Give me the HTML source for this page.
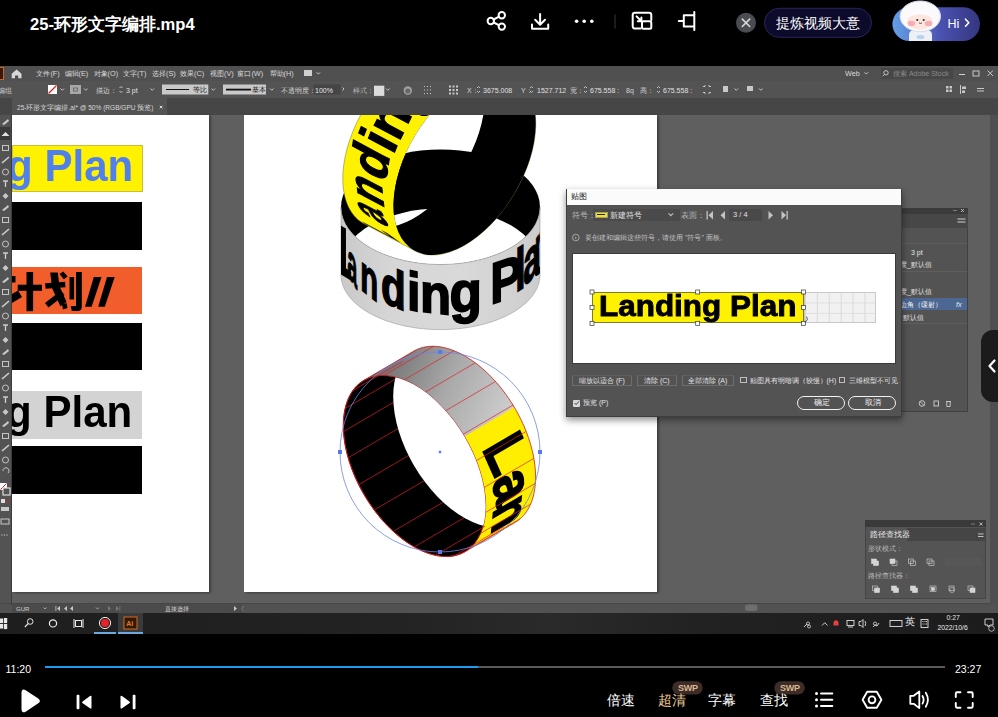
<!DOCTYPE html>
<html><head><meta charset="utf-8">
<style>
*{margin:0;padding:0;box-sizing:border-box}
html,body{width:998px;height:717px;overflow:hidden;background:#000;font-family:"Liberation Sans",sans-serif;color:#fff}
.a{position:absolute}
svg{position:absolute;left:0;top:0;overflow:visible}
.t{position:absolute;white-space:nowrap;line-height:1}
</style></head><body>
<div class="a" style="left:0;top:0;width:998px;height:66px;background:#000"></div>
<div class="t" style="left:30px;top:16.5px;font-size:16.6px;font-weight:bold;color:#fff;letter-spacing:0px">25-环形文字编排.mp4</div>
<svg width="998" height="66" viewBox="0 0 998 66">
 <g fill="none" stroke="#fff" stroke-width="2" stroke-linecap="round" stroke-linejoin="round">
  <!-- share -->
  <circle cx="490.8" cy="21" r="3.2"/><circle cx="501.8" cy="15.2" r="3.2"/><circle cx="501.8" cy="26.6" r="3.2"/>
  <line x1="493.6" y1="19.5" x2="499" y2="16.6"/><line x1="493.6" y1="22.5" x2="499" y2="25.2"/>
  <!-- download -->
  <path d="M540.1 14v10.5 M535.2 19.8l4.9 4.9 4.9-4.9 M532 24.5v4.3h16.2v-4.3"/>
  <!-- pip -->
  <path d="M640.5 28.6h-5.5a2.3 2.3 0 0 1-2.3-2.3v-11.3a2.3 2.3 0 0 1 2.3-2.3h14a2.3 2.3 0 0 1 2.3 2.3v5"/>
  <rect x="642" y="21.3" width="9.3" height="7.5" rx="1.5"/>
  <path d="M636.6 16.4l4.8 4.8 M641.4 17.6v3.6h-3.6"/>
  <!-- crop-ish -->
  <path d="M694.3 12v18 M694 15.3h-10.2v11.3h10.2 M683.8 21h-5"/>
 </g>
 <g fill="#fff"><circle cx="576.6" cy="21.2" r="1.8"/><circle cx="584.2" cy="21.2" r="1.8"/><circle cx="591.8" cy="21.2" r="1.8"/></g>
 <line x1="615" y1="14.5" x2="615" y2="28.5" stroke="#3a3a3a" stroke-width="1"/>
 <!-- close circle -->
 <circle cx="746" cy="22.8" r="10" fill="#4b4b52"/>
 <path d="M742.3 19.1l7.4 7.4M749.7 19.1l-7.4 7.4" stroke="#d8d8dc" stroke-width="1.6" stroke-linecap="round"/>
 <!-- pill -->
 <rect x="764.5" y="8.3" width="107" height="29" rx="14.5" fill="#0d0b2b" stroke="#2a2556" stroke-width="1"/>
 <defs>
  <linearGradient id="hig" x1="0" y1="0" x2="1" y2="0">
   <stop offset="0" stop-color="#62a0e4"/><stop offset="0.3" stop-color="#5a78d0"/><stop offset="0.55" stop-color="#4a52b0"/><stop offset="1" stop-color="#343680"/>
  </linearGradient>
  <radialGradient id="face" cx="0.5" cy="0.45" r="0.55"><stop offset="0" stop-color="#fff"/><stop offset="0.8" stop-color="#f4f1f6"/><stop offset="1" stop-color="#d8d6e4"/></radialGradient>
 </defs>
 <rect x="892.4" y="7.2" width="87.6" height="33.8" rx="16.9" fill="url(#hig)"/>
 <!-- astronaut -->
 <path d="M909 41v-6q0-4 4-5h15q4 1 4 5v6z" fill="#eef0f8"/>
 <ellipse cx="920.5" cy="37" rx="4" ry="2" fill="#9fc4ea" opacity="0.7"/>
 <ellipse cx="920.3" cy="16.3" rx="20.2" ry="15.3" fill="#fafafc"/>
 <ellipse cx="920.3" cy="16.3" rx="20.2" ry="15.3" fill="none" stroke="#d9dcec" stroke-width="1"/>
 <ellipse cx="920" cy="21.5" rx="12.8" ry="8.3" fill="#fde6de"/>
 <path d="M907.5 18q1-8 12.5-8.5q11.5 0.5 12.8 8.5q-6-3.5-12.8-3.5q-6.8 0-12.5 3.5z" fill="#fbfbfd"/>
 <ellipse cx="911.5" cy="23.5" rx="3.8" ry="2.8" fill="#f5a3ae" opacity="0.85"/>
 <ellipse cx="928.5" cy="23.5" rx="3.8" ry="2.8" fill="#f5a3ae" opacity="0.85"/>
 <circle cx="917.3" cy="20" r="1.05" fill="#2a2a2a"/><circle cx="923.7" cy="20" r="1.05" fill="#2a2a2a"/>
 <path d="M919 22.8q1.5 1.3 3 0" stroke="#3a2a2a" stroke-width="0.8" fill="none"/>
</svg>
<div class="t" style="left:776px;top:16.3px;font-size:14px;color:#fff">提炼视频大意</div>
<div class="t" style="left:947.5px;top:17.8px;font-size:12.5px;color:#fff">Hi</div>
<svg width="998" height="66"><path d="M965.5 19.2l3.3 3.5-3.3 3.5" stroke="#fff" stroke-width="1.6" fill="none" stroke-linecap="round" stroke-linejoin="round"/></svg>
<div class="a" style="left:0;top:66px;width:998px;height:15px;background:#505050"></div>
<div class="a" style="left:0;top:81px;width:998px;height:17px;background:#535353"></div>
<div class="a" style="left:0;top:98px;width:998px;height:17px;background:#464646"></div>
<div class="a" style="left:12px;top:98px;width:155px;height:17px;background:#535353"></div>
<div class="a" style="left:0;top:115px;width:998px;height:490px;background:#5f5f5f"></div>
<div class="a" style="left:12px;top:115px;width:197px;height:477px;background:#fff;box-shadow:2px 1px 2px rgba(0,0,0,0.35)"></div>
<div class="a" style="left:244px;top:115px;width:413px;height:477px;background:#fff;box-shadow:2px 1px 2px rgba(0,0,0,0.35)"></div>
<div class="a" style="left:0;top:115px;width:12px;height:490px;background:#535353"></div>
<div class="a" style="left:0;top:602.5px;width:998px;height:1px;background:#474747"></div>
<div class="a" style="left:0;top:603.5px;width:998px;height:9.5px;background:#525252"></div>
<div class="a" style="left:0;top:613px;width:998px;height:21px;background:#1f1f1f"></div>
<div class="a" style="left:990px;top:115px;width:8px;height:490px;background:#4f4f4f"></div>
<!-- menu bar -->
<div class="a" style="left:-5px;top:67px;width:9px;height:13px;background:#3a1a06;border:1px solid #c8641e"></div>
<svg width="998" height="717">
 <path d="M11.7 73.8l4.9-4.3 4.9 4.3v4.4h-3.3v-2.6h-3.2v2.6h-3.3z" fill="#d8d8d8"/>
 <rect x="304" y="70" width="8" height="6" fill="#cfcfcf"/>
 <path d="M316.5 72.3l1.8 1.8 1.8-1.8" stroke="#cfcfcf" stroke-width="0.9" fill="none"/>
</svg>
<div class="t" style="left:36.4px;top:70px;font-size:7.3px;color:#d8d8d8;word-spacing:0">文件(F)</div>
<div class="t" style="left:64.5px;top:70px;font-size:7.3px;color:#d8d8d8">编辑(E)</div>
<div class="t" style="left:93.6px;top:70px;font-size:7.3px;color:#d8d8d8">对象(O)</div>
<div class="t" style="left:123px;top:70px;font-size:7.3px;color:#d8d8d8">文字(T)</div>
<div class="t" style="left:152px;top:70px;font-size:7.3px;color:#d8d8d8">选择(S)</div>
<div class="t" style="left:180px;top:70px;font-size:7.3px;color:#d8d8d8">效果(C)</div>
<div class="t" style="left:210px;top:70px;font-size:7.3px;color:#d8d8d8">视图(V)</div>
<div class="t" style="left:237.4px;top:70px;font-size:7.3px;color:#d8d8d8">窗口(W)</div>
<div class="t" style="left:269.5px;top:70px;font-size:7.3px;color:#d8d8d8">帮助(H)</div>
<div class="t" style="left:845px;top:70px;font-size:7.3px;color:#d8d8d8">Web</div>
<div class="a" style="left:881px;top:68px;width:72px;height:11px;background:#474747"></div>
<div class="t" style="left:893px;top:69.5px;font-size:7px;color:#8a8a8a">搜索 Adobe Stock</div>
<svg width="998" height="717">
 <path d="M864.5 72.3l1.8 1.8 1.8-1.8" stroke="#cfcfcf" stroke-width="0.9" fill="none"/>
 <circle cx="886" cy="72.8" r="2.2" fill="none" stroke="#cfcfcf" stroke-width="0.9"/><path d="M884.4 74.5l-1.8 1.8" stroke="#cfcfcf" stroke-width="0.9"/>
 <rect x="959" y="74" width="6" height="1" fill="#d4d4d4"/>
 <rect x="973" y="71" width="6" height="5" fill="none" stroke="#d4d4d4" stroke-width="0.9"/>
 <path d="M987.5 70.5l5.5 5.5m0-5.5l-5.5 5.5" stroke="#d4d4d4" stroke-width="0.9"/>
</svg>
<!-- control bar -->
<div class="t" style="left:-2px;top:86.5px;font-size:7px;color:#c8c8c8">编组</div>
<svg width="998" height="717">
 <rect x="48" y="85" width="9" height="9" fill="#fff"/><path d="M48.5 93.5l8-8" stroke="#e02020" stroke-width="1.2"/>
 <rect x="70" y="85" width="11" height="9" fill="#a8a8a8"/><rect x="73.5" y="88" width="4" height="3" fill="none" stroke="#555" stroke-width="0.7"/>
 <g stroke="#cfcfcf" stroke-width="0.9" fill="none">
  <path d="M60.5 88.5l1.8 1.8 1.8-1.8"/><path d="M84 88.5l1.8 1.8 1.8-1.8"/>
  <path d="M150.5 88.5l1.8 1.8 1.8-1.8"/><path d="M211.5 88.5l1.8 1.8 1.8-1.8"/><path d="M270 88.5l1.8 1.8 1.8-1.8"/>
  <path d="M342.5 87.5l1.5 1.5-1.5 1.5"/><path d="M386 88.5l1.8 1.8 1.8-1.8"/>
  <path d="M119.5 88l1.5-1.5 1.5 1.5 M119.5 91l1.5 1.5 1.5-1.5"/>
 </g>
 <rect x="162" y="84.5" width="46.3" height="10" fill="#c9c9c9"/><rect x="166" y="89" width="23" height="1" fill="#111"/>
 <rect x="223" y="84.5" width="43" height="10" fill="#c9c9c9"/><rect x="226" y="88.7" width="25" height="1.8" fill="#111"/>
 <rect x="313.5" y="84.5" width="27" height="10" fill="#454545"/>
 <rect x="374" y="85.7" width="10.3" height="10.2" fill="#dcdcdc"/>
 <circle cx="407.8" cy="90.5" r="4.2" fill="#a0a0a0"/><circle cx="407.8" cy="91" r="2.5" fill="#666"/>
 <g fill="#c8c8c8"><rect x="424" y="86" width="1" height="1"/><rect x="427" y="86" width="1" height="1"/><rect x="430" y="86" width="1" height="1"/><rect x="424" y="89.5" width="1" height="1"/><rect x="427" y="89.5" width="1" height="1"/><rect x="430" y="89.5" width="1" height="1"/><rect x="424" y="93" width="1" height="1"/><rect x="427" y="93" width="1" height="1"/><rect x="430" y="93" width="1" height="1"/></g>
 <g fill="#c8c8c8"><rect x="449" y="85.5" width="2" height="2"/><rect x="452.5" y="85.5" width="2" height="2"/><rect x="456" y="85.5" width="2" height="2"/><rect x="449" y="89" width="2" height="2"/><rect x="452.5" y="89" width="2" height="2"/><rect x="456" y="89" width="2" height="2"/><rect x="449" y="92.5" width="2" height="2"/><rect x="452.5" y="92.5" width="2" height="2"/><rect x="456" y="92.5" width="2" height="2"/></g>
 <g stroke="#cfcfcf" stroke-width="0.9" fill="none">
  <path d="M477 88l1.5-1.5 1.5 1.5 M477 91l1.5 1.5 1.5-1.5"/>
  <path d="M530 88l1.5-1.5 1.5 1.5 M530 91l1.5 1.5 1.5-1.5"/>
  <path d="M584 88l1.5-1.5 1.5 1.5 M584 91l1.5 1.5 1.5-1.5"/>
  <path d="M657 88l1.5-1.5 1.5 1.5 M657 91l1.5 1.5 1.5-1.5"/>
  <path d="M703 86.5h2v-1.5 M709 85v1.5h2 M711 92.5h-2v1.5 M705 94v-1.5h-2"/>
  <path d="M734.5 88.5l1.8 1.8 1.8-1.8"/><path d="M759 88.5l1.8 1.8 1.8-1.8"/>
 </g>
 <g fill="#c8c8c8"><rect x="723" y="86" width="5" height="6"/><rect x="747" y="86" width="6" height="5"/>
 <rect x="946" y="86" width="2.5" height="2.5"/><rect x="949.5" y="86" width="2.5" height="2.5"/><rect x="946" y="89.5" width="2.5" height="2.5"/><rect x="949.5" y="89.5" width="2.5" height="2.5"/>
 <rect x="960" y="85" width="1" height="9"/><rect x="962" y="86.5" width="4" height="2.5"/><rect x="962" y="90.5" width="3" height="2.5"/>
 <rect x="977" y="88" width="7" height="1"/><rect x="977" y="90.5" width="7" height="1"/></g>
</svg>
<div class="t" style="left:96px;top:86.5px;font-size:7.3px;color:#d4d4d4">描边：</div>
<div class="t" style="left:126px;top:86.5px;font-size:7px;color:#e0e0e0">3 pt</div>
<div class="t" style="left:193px;top:86px;font-size:7px;color:#222">等比</div>
<div class="t" style="left:252px;top:86px;font-size:7px;color:#222">基本</div>
<div class="t" style="left:281px;top:86.5px;font-size:7.3px;color:#d4d4d4">不透明度：</div>
<div class="t" style="left:315px;top:86.5px;font-size:7px;color:#e8e8e8">100%</div>
<div class="t" style="left:353px;top:86.5px;font-size:7.3px;color:#b8b8b8">样式：</div>
<div class="t" style="left:467px;top:86.5px;font-size:7px;color:#d4d4d4">X：</div>
<div class="t" style="left:483px;top:86.5px;font-size:7px;color:#e0e0e0">3675.008</div>
<div class="t" style="left:521px;top:86.5px;font-size:7px;color:#d4d4d4">Y：</div>
<div class="t" style="left:537px;top:86.5px;font-size:7px;color:#e0e0e0">1527.712</div>
<div class="t" style="left:570px;top:86.5px;font-size:7px;color:#d4d4d4">宽：</div>
<div class="t" style="left:590px;top:86.5px;font-size:7px;color:#e0e0e0">675.558 :</div>
<div class="t" style="left:626px;top:86.5px;font-size:7px;color:#d4d4d4">8q</div>
<div class="t" style="left:640px;top:86.5px;font-size:7px;color:#d4d4d4">高：</div>
<div class="t" style="left:663px;top:86.5px;font-size:7px;color:#e0e0e0">675.558 :</div>
<!-- tab bar -->
<div class="t" style="left:17px;top:105px;font-size:6.55px;color:#d8d8d8">25-环形文字编排.ai* @ 50% (RGB/GPU 预览)</div>
<svg width="998" height="717"><path d="M159.8 105.8l2.6 2.6m0-2.6l-2.6 2.6" stroke="#e0e0e0" stroke-width="1"/></svg>
<svg width="998" height="717"><rect x="0" y="127" width="10.5" height="13" fill="#3a3a3a"/><path d="M1.5 136l4-4 4 4z" fill="#e0e0e0"/><path d="M2 124.0 l6 -5 l1 2 l-5 4z" fill="#c8c8c8"/><rect x="2.5" y="145.5" width="6" height="5" fill="none" stroke="#c4c4c4" stroke-width="1"/><path d="M2 163.0 l7 -6" stroke="#cfcfcf" stroke-width="1.6"/><circle cx="5.5" cy="172.0" r="3" fill="none" stroke="#c4c4c4" stroke-width="1"/><path d="M3 181.0 h5 M5.5 181.0 v6" stroke="#cfcfcf" stroke-width="1.3"/><path d="M2.5 196.0 l3 -3 l3 3 l-3 3z" fill="#c8c8c8"/><path d="M2 210.0 l6 -5 l1 2 l-5 4z" fill="#c8c8c8"/><rect x="2.5" y="217.5" width="6" height="5" fill="none" stroke="#c4c4c4" stroke-width="1"/><path d="M2 235.0 l7 -6" stroke="#cfcfcf" stroke-width="1.6"/><circle cx="5.5" cy="244.0" r="3" fill="none" stroke="#c4c4c4" stroke-width="1"/><path d="M3 253.0 h5 M5.5 253.0 v6" stroke="#cfcfcf" stroke-width="1.3"/><path d="M2.5 268.0 l3 -3 l3 3 l-3 3z" fill="#c8c8c8"/><path d="M2 282.0 l6 -5 l1 2 l-5 4z" fill="#c8c8c8"/><rect x="2.5" y="289.5" width="6" height="5" fill="none" stroke="#c4c4c4" stroke-width="1"/><path d="M2 307.0 l7 -6" stroke="#cfcfcf" stroke-width="1.6"/><circle cx="5.5" cy="316.0" r="3" fill="none" stroke="#c4c4c4" stroke-width="1"/><path d="M3 325.0 h5 M5.5 325.0 v6" stroke="#cfcfcf" stroke-width="1.3"/><path d="M2.5 340.0 l3 -3 l3 3 l-3 3z" fill="#c8c8c8"/><path d="M2 354.0 l6 -5 l1 2 l-5 4z" fill="#c8c8c8"/><rect x="2.5" y="361.5" width="6" height="5" fill="none" stroke="#c4c4c4" stroke-width="1"/><path d="M2 379.0 l7 -6" stroke="#cfcfcf" stroke-width="1.6"/><circle cx="5.5" cy="388.0" r="3" fill="none" stroke="#c4c4c4" stroke-width="1"/><path d="M3 397.0 h5 M5.5 397.0 v6" stroke="#cfcfcf" stroke-width="1.3"/><path d="M2.5 412.0 l3 -3 l3 3 l-3 3z" fill="#c8c8c8"/><path d="M2 426.0 l6 -5 l1 2 l-5 4z" fill="#c8c8c8"/><rect x="2.5" y="433.5" width="6" height="5" fill="none" stroke="#c4c4c4" stroke-width="1"/><path d="M2 451.0 l7 -6" stroke="#cfcfcf" stroke-width="1.6"/><circle cx="5.5" cy="460.0" r="3" fill="none" stroke="#c4c4c4" stroke-width="1"/><path d="M3 471a3 3 0 1 1 5 2" stroke="#c8c8c8" stroke-width="1" fill="none"/><rect x="0" y="483" width="7" height="7" fill="#fff"/><path d="M0.5 489.5l6-6" stroke="#e02020" stroke-width="1"/><rect x="3" y="488" width="7" height="7" fill="#535353" stroke="#ddd" stroke-width="1.2"/><rect x="1" y="499" width="4" height="4" fill="#ddd"/><path d="M6 503l4-4" stroke="#e02020" stroke-width="1"/><rect x="1" y="507" width="8" height="4" fill="#c8c8c8"/><rect x="1" y="519" width="8" height="5" fill="none" stroke="#c8c8c8" stroke-width="1"/><g fill="#bbb"><circle cx="2" cy="535" r="0.7"/><circle cx="4.5" cy="535" r="0.7"/><circle cx="7" cy="535" r="0.7"/></g><rect x="11" y="115" width="1" height="490" fill="#3c3c3c"/></svg>
<div class="a" style="left:12px;top:115px;width:197px;height:477px;overflow:hidden">
 <div class="a" style="left:0;top:30.3px;width:130.5px;height:47px;background:#fff200;border:0.6px solid #c9bd3a"></div>
 <div class="t" style="left:-5.4px;top:28.1px;font-size:45px;font-weight:bold;color:#5180ea;transform:scaleX(0.935);transform-origin:0 0">g Plan</div>
 <div class="a" style="left:0;top:87px;width:130px;height:48.2px;background:#000"></div>
 <div class="a" style="left:0;top:151.5px;width:130px;height:47.5px;background:#f15d2b"></div>
 <svg width="197" height="477" viewBox="12 115 197 477" style="left:0;top:0">
  <g fill="#000">
   <path d="M12 276h3.5v6.5h-3.5z M12 294l6-3.5 4 6.5-10 6z"/>
   <rect x="26.5" y="272" width="6.6" height="39.2"/>
   <rect x="17.7" y="284.7" width="24.3" height="6.1"/>
   <rect x="45.3" y="282.5" width="20" height="5.6" transform="rotate(-4 55 285)"/>
   <path d="M50.2 272.5h7.6l1.6 13.5 7.2 16-6.2 4.2-8.2-17.7z"/>
   <path d="M45 303l16-12.5 3.5 4.5-16 12.5z"/>
   <path d="M59.5 274l3.8-2.5 4.3 5-3.8 2.7z"/>
   <path d="M62 304.5l4.5-1.5 1 5-4.5 1.5z"/>
   <rect x="69.5" y="277" width="4.6" height="22.5"/>
   <path d="M76 272h5.8v34.5q0 4.5-4.5 4.5h-5.5l-1-5h5.2z"/>
   <path d="M93.8 277h7.7l-9.9 29.8h-6.6z"/>
   <path d="M107 277h7.7l-9.9 29.8h-6.6z"/>
  </g>
 </svg>
 <div class="a" style="left:0;top:207.5px;width:130px;height:47.5px;background:#000"></div>
 <div class="a" style="left:0;top:276px;width:130px;height:48px;background:#d3d3d3"></div>
 <div class="t" style="left:-6.2px;top:273.9px;font-size:45px;font-weight:bold;color:#000;transform:scaleX(0.935);transform-origin:0 0">g Plan</div>
 <div class="a" style="left:0;top:331px;width:130px;height:47.5px;background:#000"></div>
</div>
<svg width="998" height="717" viewBox="0 0 998 717"><defs><clipPath id="cAB2"><rect x="244" y="115" width="413" height="477"/></clipPath><clipPath id="cEbot"><ellipse cx="440.50" cy="266.00" rx="99.50" ry="57.50" transform="rotate(0.00 440.50 266.00)" /></clipPath><clipPath id="cE1"><ellipse cx="464.60" cy="164.70" rx="99.50" ry="57.50" transform="rotate(-59.00 464.60 164.70)" /></clipPath><mask id="mHole1" maskUnits="userSpaceOnUse" x="200" y="0" width="500" height="400"><rect x="200" y="0" width="500" height="400" fill="#fff"/><g clip-path="url(#cE1)"><ellipse cx="413.90" cy="137.70" rx="99.50" ry="57.50" transform="rotate(-59.00 413.90 137.70)" fill="#000"/></g></mask><linearGradient id="gBand" x1="341" y1="0" x2="540" y2="0" gradientUnits="userSpaceOnUse"><stop offset="0" stop-color="#c9c9c9"/><stop offset="0.25" stop-color="#d6d6d6"/><stop offset="0.6" stop-color="#d9d9d9"/><stop offset="1" stop-color="#cdcdcd"/></linearGradient></defs><g clip-path="url(#cAB2)"><ellipse cx="440.50" cy="207.00" rx="99.50" ry="57.50" transform="rotate(0.00 440.50 207.00)" fill="#000"/><g clip-path="url(#cEbot)"><ellipse cx="440.50" cy="207.00" rx="99.50" ry="57.50" transform="rotate(0.00 440.50 207.00)" fill="#fff"/></g><g mask="url(#mHole1)"><path d="M462.50 50.98 L463.84 51.67 L514.54 78.67 L515.85 79.41 L517.12 80.22 L518.36 81.08 L519.56 82.00 L520.72 82.97 L521.84 84.01 L522.93 85.09 L523.97 86.24 L524.97 87.43 L525.94 88.68 L526.86 89.98 L527.73 91.34 L528.57 92.74 L529.36 94.19 L530.11 95.69 L530.81 97.24 L531.46 98.83 L532.07 100.47 L532.64 102.15 L533.15 103.88 L533.62 105.65 L534.05 107.45 L534.42 109.30 L534.75 111.19 L535.03 113.11 L535.26 115.06 L535.44 117.06 L535.58 119.08 L535.66 121.13 L535.70 123.22 L535.69 125.33 L535.63 127.47 L535.52 129.64 L535.36 131.83 L535.15 134.04 L534.90 136.27 L534.60 138.53 L534.25 140.80 L533.85 143.09 L533.40 145.39 L532.91 147.70 L532.37 150.03 L531.78 152.37 L531.15 154.71 L530.47 157.06 L529.75 159.42 L528.98 161.78 L528.17 164.15 L527.31 166.51 L526.41 168.87 L525.47 171.23 L524.49 173.59 L523.46 175.94 L522.40 178.28 L521.30 180.61 L520.15 182.93 L518.97 185.24 L517.76 187.53 L516.50 189.81 L515.21 192.07 L513.89 194.31 L512.53 196.54 L511.14 198.74 L509.71 200.92 L508.26 203.07 L506.78 205.19 L505.26 207.29 L503.72 209.36 L502.16 211.40 L500.56 213.41 L498.94 215.38 L497.30 217.32 L495.64 219.22 L493.95 221.09 L492.25 222.91 L490.52 224.70 L488.78 226.44 L487.02 228.15 L485.25 229.81 L483.46 231.42 L481.66 232.99 L479.85 234.51 L478.02 235.99 L476.19 237.41 L474.35 238.79 L472.51 240.12 L470.65 241.39 L468.80 242.61 L466.94 243.78 L465.08 244.89 L463.21 245.95 L461.35 246.95 L459.50 247.90 L457.64 248.79 L455.79 249.62 L453.95 250.39 L452.11 251.11 L450.28 251.76 L448.46 252.36 L446.66 252.89 L444.86 253.37 L443.08 253.78 L441.32 254.14 L439.56 254.43 L437.83 254.66 L436.12 254.83 L434.42 254.94 L432.75 254.98 L431.09 254.97 L429.46 254.89 L427.86 254.75 L426.28 254.55 L424.72 254.28 L423.19 253.96 L421.69 253.57 L420.23 253.12 L418.79 252.62 L417.38 252.05 L416.00 251.42 L414.66 250.73 L363.96 223.73 L362.65 222.99 L361.38 222.18 L360.14 221.32 L358.94 220.40 L357.78 219.43 L356.66 218.39 L355.57 217.31 L354.53 216.16 L353.53 214.97 L352.56 213.72 L351.64 212.42 L350.77 211.06 L349.93 209.66 L349.14 208.21 L348.39 206.71 L347.69 205.16 L347.04 203.57 L346.43 201.93 L345.86 200.25 L345.35 198.52 L344.88 196.75 L344.45 194.95 L344.08 193.10 L343.75 191.21 L343.47 189.29 L343.24 187.34 L343.06 185.34 L342.92 183.32 L342.84 181.27 L342.80 179.18 L342.81 177.07 L342.87 174.93 L342.98 172.76 L343.14 170.57 L343.35 168.36 L343.60 166.13 L343.90 163.87 L344.25 161.60 L344.65 159.31 L345.10 157.01 L345.59 154.70 L346.13 152.37 L346.72 150.03 L347.35 147.69 L348.03 145.34 L348.75 142.98 L349.52 140.62 L350.33 138.25 L351.19 135.89 L352.09 133.53 L353.03 131.17 L354.01 128.81 L355.04 126.46 L356.10 124.12 L357.20 121.79 L358.35 119.47 L359.53 117.16 L360.74 114.87 L362.00 112.59 L363.29 110.33 L364.61 108.09 L365.97 105.86 L367.36 103.66 L368.79 101.48 L370.24 99.33 L371.72 97.21 L373.24 95.11 L374.78 93.04 L376.34 91.00 L377.94 88.99 L379.56 87.02 L381.20 85.08 L382.86 83.18 L384.55 81.31 L386.25 79.49 L387.98 77.70 L389.72 75.96 L391.48 74.25 L393.25 72.59 L395.04 70.98 L396.84 69.41 L398.65 67.89 L400.48 66.41 L402.31 64.99 L404.15 63.61 L405.99 62.28 L407.85 61.01 L409.70 59.79 L411.56 58.62 L413.42 57.51 L415.29 56.45 L417.15 55.45 L419.00 54.50 L420.86 53.61 L422.71 52.78 L424.55 52.01 L426.39 51.29 L428.22 50.64 L430.04 50.04 L431.84 49.51 L433.64 49.03 L435.42 48.62 L437.18 48.26 L438.94 47.97 L440.67 47.74 L442.38 47.57 L444.08 47.46 L445.75 47.42 L447.41 47.43 L449.04 47.51 L450.64 47.65 L452.22 47.85 L453.78 48.12 L455.31 48.44 L456.81 48.83 L458.27 49.28 L459.71 49.78 L461.12 50.35Z" fill="#fff200" stroke="#444" stroke-width="0.4"/><ellipse cx="464.60" cy="164.70" rx="99.50" ry="57.50" transform="rotate(-59.00 464.60 164.70)" fill="#000"/></g><g font-family="Liberation Sans" font-weight="bold" fill="#000" stroke="#000" stroke-width="1.1" mask="url(#mHole1)"><text transform="matrix(-0.4946 -0.3537 0.9882 0.5263 401.50 243.40)" font-size="50.0">L</text><text transform="matrix(-0.2947 -0.6112 0.9882 0.5263 389.58 228.83)" font-size="50.0">a</text><text transform="matrix(-0.0867 -0.7935 0.9882 0.5263 384.34 209.54)" font-size="50.0">n</text><text transform="matrix(0.1493 -0.9181 0.9882 0.5263 385.29 183.68)" font-size="50.0">d</text><text transform="matrix(0.3705 -0.9517 0.9882 0.5263 393.14 155.44)" font-size="50.0">i</text><text transform="matrix(0.4602 -0.9357 0.9882 0.5263 398.81 142.56)" font-size="50.0">n</text><text transform="matrix(0.6216 -0.8335 0.9882 0.5263 415.15 115.84)" font-size="50.0">g</text></g><path d="M540.00 207.00 L539.97 208.52 L539.86 210.03 L539.69 211.55 L539.45 213.06 L539.13 214.57 L538.75 216.07 L538.31 217.57 L537.79 219.05 L537.20 220.53 L536.55 222.00 L535.83 223.46 L535.05 224.91 L534.20 226.35 L533.28 227.77 L532.30 229.18 L531.25 230.57 L530.15 231.95 L528.98 233.31 L527.74 234.65 L526.45 235.97 L525.10 237.27 L523.68 238.55 L522.21 239.81 L520.69 241.04 L519.10 242.25 L517.47 243.44 L515.78 244.60 L514.03 245.74 L512.24 246.85 L510.39 247.93 L508.50 248.98 L506.56 250.00 L504.57 250.99 L502.54 251.96 L500.46 252.89 L498.35 253.78 L496.19 254.65 L493.99 255.48 L491.76 256.28 L489.49 257.05 L487.19 257.78 L484.85 258.47 L482.48 259.13 L480.09 259.75 L477.67 260.34 L475.22 260.89 L472.74 261.40 L470.25 261.87 L467.73 262.30 L465.19 262.70 L462.64 263.06 L460.07 263.38 L457.49 263.66 L454.90 263.89 L452.29 264.09 L449.68 264.25 L447.06 264.37 L444.44 264.45 L441.81 264.49 L439.19 264.49 L436.56 264.45 L433.94 264.37 L431.32 264.25 L428.71 264.09 L426.10 263.89 L423.51 263.66 L420.93 263.38 L418.36 263.06 L415.81 262.70 L413.27 262.30 L410.75 261.87 L408.26 261.40 L405.78 260.89 L403.33 260.34 L400.91 259.75 L398.52 259.13 L396.15 258.47 L393.81 257.78 L391.51 257.05 L389.24 256.28 L387.01 255.48 L384.81 254.65 L382.65 253.78 L380.54 252.89 L378.46 251.96 L376.43 250.99 L374.44 250.00 L372.50 248.98 L370.61 247.93 L368.76 246.85 L366.97 245.74 L365.22 244.60 L363.53 243.44 L361.90 242.25 L360.31 241.04 L358.79 239.81 L357.32 238.55 L355.90 237.27 L354.55 235.97 L353.26 234.65 L352.02 233.31 L350.85 231.95 L349.75 230.57 L348.70 229.18 L347.72 227.77 L346.80 226.35 L345.95 224.91 L345.17 223.46 L344.45 222.00 L343.80 220.53 L343.21 219.05 L342.69 217.57 L342.25 216.07 L341.87 214.57 L341.55 213.06 L341.31 211.55 L341.14 210.03 L341.03 208.52 L341.00 207.00 L341.00 274.80 L341.03 276.25 L341.14 277.69 L341.31 279.14 L341.55 280.58 L341.87 282.01 L342.25 283.44 L342.69 284.87 L343.21 286.29 L343.80 287.70 L344.45 289.10 L345.17 290.49 L345.95 291.87 L346.80 293.24 L347.72 294.60 L348.70 295.94 L349.75 297.27 L350.85 298.58 L352.02 299.87 L353.26 301.15 L354.55 302.41 L355.90 303.65 L357.32 304.87 L358.79 306.07 L360.31 307.24 L361.90 308.40 L363.53 309.53 L365.22 310.64 L366.97 311.72 L368.76 312.77 L370.61 313.80 L372.50 314.81 L374.44 315.78 L376.43 316.73 L378.46 317.64 L380.54 318.53 L382.65 319.39 L384.81 320.21 L387.01 321.01 L389.24 321.77 L391.51 322.50 L393.81 323.19 L396.15 323.85 L398.52 324.48 L400.91 325.08 L403.33 325.63 L405.78 326.16 L408.26 326.64 L410.75 327.09 L413.27 327.51 L415.81 327.89 L418.36 328.23 L420.93 328.53 L423.51 328.80 L426.10 329.02 L428.71 329.21 L431.32 329.37 L433.94 329.48 L436.56 329.56 L439.19 329.60 L441.81 329.60 L444.44 329.56 L447.06 329.48 L449.68 329.37 L452.29 329.21 L454.90 329.02 L457.49 328.80 L460.07 328.53 L462.64 328.23 L465.19 327.89 L467.73 327.51 L470.25 327.09 L472.74 326.64 L475.22 326.16 L477.67 325.63 L480.09 325.08 L482.48 324.48 L484.85 323.85 L487.19 323.19 L489.49 322.50 L491.76 321.77 L493.99 321.01 L496.19 320.21 L498.35 319.39 L500.46 318.53 L502.54 317.64 L504.57 316.73 L506.56 315.78 L508.50 314.81 L510.39 313.80 L512.24 312.77 L514.03 311.72 L515.78 310.64 L517.47 309.53 L519.10 308.40 L520.69 307.24 L522.21 306.07 L523.68 304.87 L525.10 303.65 L526.45 302.41 L527.74 301.15 L528.98 299.87 L530.15 298.58 L531.25 297.27 L532.30 295.94 L533.28 294.60 L534.20 293.24 L535.05 291.87 L535.83 290.49 L536.55 289.10 L537.20 287.70 L537.79 286.29 L538.31 284.87 L538.75 283.44 L539.13 282.01 L539.45 280.58 L539.69 279.14 L539.86 277.69 L539.97 276.25 L540.00 274.80Z" fill="url(#gBand)" stroke="#8a8a8a" stroke-width="0.5"/><clipPath id="cBand"><path d="M540.00 207.00 L539.97 208.52 L539.86 210.03 L539.69 211.55 L539.45 213.06 L539.13 214.57 L538.75 216.07 L538.31 217.57 L537.79 219.05 L537.20 220.53 L536.55 222.00 L535.83 223.46 L535.05 224.91 L534.20 226.35 L533.28 227.77 L532.30 229.18 L531.25 230.57 L530.15 231.95 L528.98 233.31 L527.74 234.65 L526.45 235.97 L525.10 237.27 L523.68 238.55 L522.21 239.81 L520.69 241.04 L519.10 242.25 L517.47 243.44 L515.78 244.60 L514.03 245.74 L512.24 246.85 L510.39 247.93 L508.50 248.98 L506.56 250.00 L504.57 250.99 L502.54 251.96 L500.46 252.89 L498.35 253.78 L496.19 254.65 L493.99 255.48 L491.76 256.28 L489.49 257.05 L487.19 257.78 L484.85 258.47 L482.48 259.13 L480.09 259.75 L477.67 260.34 L475.22 260.89 L472.74 261.40 L470.25 261.87 L467.73 262.30 L465.19 262.70 L462.64 263.06 L460.07 263.38 L457.49 263.66 L454.90 263.89 L452.29 264.09 L449.68 264.25 L447.06 264.37 L444.44 264.45 L441.81 264.49 L439.19 264.49 L436.56 264.45 L433.94 264.37 L431.32 264.25 L428.71 264.09 L426.10 263.89 L423.51 263.66 L420.93 263.38 L418.36 263.06 L415.81 262.70 L413.27 262.30 L410.75 261.87 L408.26 261.40 L405.78 260.89 L403.33 260.34 L400.91 259.75 L398.52 259.13 L396.15 258.47 L393.81 257.78 L391.51 257.05 L389.24 256.28 L387.01 255.48 L384.81 254.65 L382.65 253.78 L380.54 252.89 L378.46 251.96 L376.43 250.99 L374.44 250.00 L372.50 248.98 L370.61 247.93 L368.76 246.85 L366.97 245.74 L365.22 244.60 L363.53 243.44 L361.90 242.25 L360.31 241.04 L358.79 239.81 L357.32 238.55 L355.90 237.27 L354.55 235.97 L353.26 234.65 L352.02 233.31 L350.85 231.95 L349.75 230.57 L348.70 229.18 L347.72 227.77 L346.80 226.35 L345.95 224.91 L345.17 223.46 L344.45 222.00 L343.80 220.53 L343.21 219.05 L342.69 217.57 L342.25 216.07 L341.87 214.57 L341.55 213.06 L341.31 211.55 L341.14 210.03 L341.03 208.52 L341.00 207.00 L341.00 274.80 L341.03 276.25 L341.14 277.69 L341.31 279.14 L341.55 280.58 L341.87 282.01 L342.25 283.44 L342.69 284.87 L343.21 286.29 L343.80 287.70 L344.45 289.10 L345.17 290.49 L345.95 291.87 L346.80 293.24 L347.72 294.60 L348.70 295.94 L349.75 297.27 L350.85 298.58 L352.02 299.87 L353.26 301.15 L354.55 302.41 L355.90 303.65 L357.32 304.87 L358.79 306.07 L360.31 307.24 L361.90 308.40 L363.53 309.53 L365.22 310.64 L366.97 311.72 L368.76 312.77 L370.61 313.80 L372.50 314.81 L374.44 315.78 L376.43 316.73 L378.46 317.64 L380.54 318.53 L382.65 319.39 L384.81 320.21 L387.01 321.01 L389.24 321.77 L391.51 322.50 L393.81 323.19 L396.15 323.85 L398.52 324.48 L400.91 325.08 L403.33 325.63 L405.78 326.16 L408.26 326.64 L410.75 327.09 L413.27 327.51 L415.81 327.89 L418.36 328.23 L420.93 328.53 L423.51 328.80 L426.10 329.02 L428.71 329.21 L431.32 329.37 L433.94 329.48 L436.56 329.56 L439.19 329.60 L441.81 329.60 L444.44 329.56 L447.06 329.48 L449.68 329.37 L452.29 329.21 L454.90 329.02 L457.49 328.80 L460.07 328.53 L462.64 328.23 L465.19 327.89 L467.73 327.51 L470.25 327.09 L472.74 326.64 L475.22 326.16 L477.67 325.63 L480.09 325.08 L482.48 324.48 L484.85 323.85 L487.19 323.19 L489.49 322.50 L491.76 321.77 L493.99 321.01 L496.19 320.21 L498.35 319.39 L500.46 318.53 L502.54 317.64 L504.57 316.73 L506.56 315.78 L508.50 314.81 L510.39 313.80 L512.24 312.77 L514.03 311.72 L515.78 310.64 L517.47 309.53 L519.10 308.40 L520.69 307.24 L522.21 306.07 L523.68 304.87 L525.10 303.65 L526.45 302.41 L527.74 301.15 L528.98 299.87 L530.15 298.58 L531.25 297.27 L532.30 295.94 L533.28 294.60 L534.20 293.24 L535.05 291.87 L535.83 290.49 L536.55 289.10 L537.20 287.70 L537.79 286.29 L538.31 284.87 L538.75 283.44 L539.13 282.01 L539.45 280.58 L539.69 279.14 L539.86 277.69 L539.97 276.25 L540.00 274.80Z"/></clipPath><g font-family="Liberation Sans" font-weight="bold" fill="#000" stroke="#000" stroke-width="1.5" clip-path="url(#cBand)"><text transform="matrix(0.0617 0.5625 0.0000 1.0306 341.20 258.63)" font-size="50.0">L</text><text transform="matrix(0.3464 0.5302 0.0000 1.0362 347.41 275.31)" font-size="50.0">a</text><text transform="matrix(0.5858 0.4623 0.0000 1.0477 360.22 288.97)" font-size="50.0">n</text><text transform="matrix(0.8089 0.3488 0.0000 1.0664 381.00 301.08)" font-size="50.0">d</text><text transform="matrix(0.9713 0.2006 0.0000 1.0898 407.01 309.14)" font-size="50.0">i</text><text transform="matrix(1.0200 0.1244 0.0000 1.1015 419.96 311.26)" font-size="50.0">n</text><text transform="matrix(1.0633 -0.0553 0.0000 1.1280 449.42 312.27)" font-size="50.0">g</text><text transform="matrix(0.9550 -0.3182 0.0000 1.1647 490.19 304.82)" font-size="50.0">P</text><text transform="matrix(0.7432 -0.4870 0.0000 1.1872 515.13 293.03)" font-size="50.0">l</text><text transform="matrix(0.6265 -0.5439 0.0000 1.1946 523.33 286.86)" font-size="50.0">a</text><text transform="matrix(0.3547 -0.6265 0.0000 1.2052 535.07 272.88)" font-size="50.0">n</text><path d="M340 226L345.2 229L345.2 268.5L350.5 272.5L349.8 279L340 273Z"/></g></g></svg>
<svg width="998" height="717" viewBox="0 0 998 717"><defs><clipPath id="cHull2"><path d="M465.30 551.56 L463.98 552.30 L462.62 552.99 L461.23 553.61 L459.81 554.18 L458.35 554.69 L456.87 555.13 L455.36 555.52 L453.82 555.84 L452.25 556.10 L450.66 556.30 L449.04 556.44 L447.40 556.52 L445.74 556.53 L444.05 556.48 L442.35 556.37 L440.62 556.20 L438.88 555.97 L437.12 555.67 L435.35 555.32 L433.56 554.90 L431.76 554.42 L429.94 553.88 L428.12 553.28 L426.28 552.62 L424.44 551.90 L422.59 551.12 L420.74 550.29 L418.88 549.39 L417.02 548.44 L415.16 547.44 L413.29 546.37 L411.43 545.25 L409.57 544.08 L407.71 542.85 L405.86 541.58 L404.01 540.24 L402.17 538.86 L400.34 537.43 L398.52 535.95 L396.71 534.42 L394.91 532.85 L393.13 531.23 L391.36 529.56 L389.60 527.85 L387.86 526.10 L386.15 524.30 L384.45 522.47 L382.77 520.60 L381.11 518.69 L379.48 516.75 L377.87 514.77 L376.28 512.75 L374.72 510.71 L373.19 508.63 L371.69 506.53 L370.21 504.39 L368.77 502.23 L367.36 500.05 L365.98 497.84 L364.63 495.61 L363.32 493.36 L362.04 491.09 L360.80 488.81 L359.59 486.51 L358.42 484.19 L357.30 481.86 L356.21 479.52 L355.16 477.18 L354.15 474.82 L353.18 472.46 L352.25 470.09 L351.37 467.72 L350.53 465.35 L349.74 462.98 L348.98 460.62 L348.28 458.25 L347.62 455.89 L347.00 453.54 L346.43 451.20 L345.91 448.87 L345.44 446.55 L345.01 444.24 L344.63 441.94 L344.29 439.67 L344.01 437.41 L343.77 435.17 L343.59 432.95 L343.45 430.76 L343.36 428.59 L343.32 426.44 L343.32 424.32 L343.38 422.23 L343.48 420.17 L343.64 418.15 L343.84 416.15 L344.09 414.19 L344.39 412.26 L344.73 410.37 L345.13 408.52 L345.57 406.71 L346.06 404.94 L346.60 403.21 L347.18 401.53 L347.81 399.89 L348.48 398.29 L349.20 396.74 L349.97 395.24 L350.78 393.78 L351.63 392.38 L352.52 391.02 L353.46 389.72 L354.44 388.47 L355.46 387.27 L356.52 386.13 L357.63 385.04 L358.77 384.01 L359.94 383.03 L361.16 382.11 L362.41 381.25 L363.70 380.44 L413.60 351.24 L414.92 350.50 L416.28 349.81 L417.67 349.19 L419.09 348.62 L420.55 348.11 L422.03 347.67 L423.54 347.28 L425.08 346.96 L426.65 346.70 L428.24 346.50 L429.86 346.36 L431.50 346.28 L433.16 346.27 L434.85 346.32 L436.55 346.43 L438.28 346.60 L440.02 346.83 L441.78 347.13 L443.55 347.48 L445.34 347.90 L447.14 348.38 L448.96 348.92 L450.78 349.52 L452.62 350.18 L454.46 350.90 L456.31 351.68 L458.16 352.51 L460.02 353.41 L461.88 354.36 L463.74 355.36 L465.61 356.43 L467.47 357.55 L469.33 358.72 L471.19 359.95 L473.04 361.22 L474.89 362.56 L476.73 363.94 L478.56 365.37 L480.38 366.85 L482.19 368.38 L483.99 369.95 L485.77 371.57 L487.54 373.24 L489.30 374.95 L491.04 376.70 L492.75 378.50 L494.45 380.33 L496.13 382.20 L497.79 384.11 L499.42 386.05 L501.03 388.03 L502.62 390.05 L504.18 392.09 L505.71 394.17 L507.21 396.27 L508.69 398.41 L510.13 400.57 L511.54 402.75 L512.92 404.96 L514.27 407.19 L515.58 409.44 L516.86 411.71 L518.10 413.99 L519.31 416.29 L520.48 418.61 L521.60 420.94 L522.69 423.28 L523.74 425.62 L524.75 427.98 L525.72 430.34 L526.65 432.71 L527.53 435.08 L528.37 437.45 L529.16 439.82 L529.92 442.18 L530.62 444.55 L531.28 446.91 L531.90 449.26 L532.47 451.60 L532.99 453.93 L533.46 456.25 L533.89 458.56 L534.27 460.86 L534.61 463.13 L534.89 465.39 L535.13 467.63 L535.31 469.85 L535.45 472.04 L535.54 474.21 L535.58 476.36 L535.58 478.48 L535.52 480.57 L535.42 482.63 L535.26 484.65 L535.06 486.65 L534.81 488.61 L534.51 490.54 L534.17 492.43 L533.77 494.28 L533.33 496.09 L532.84 497.86 L532.30 499.59 L531.72 501.27 L531.09 502.91 L530.42 504.51 L529.70 506.06 L528.93 507.56 L528.12 509.02 L527.27 510.42 L526.38 511.78 L525.44 513.08 L524.46 514.33 L523.44 515.53 L522.38 516.67 L521.27 517.76 L520.13 518.79 L518.96 519.77 L517.74 520.69 L516.49 521.55 L515.20 522.36Z"/></clipPath><clipPath id="cEA"><ellipse cx="414.50" cy="466.00" rx="99.50" ry="58.00" transform="rotate(59.30 414.50 466.00)" /></clipPath><linearGradient id="gTop2" x1="380" y1="365" x2="510" y2="420" gradientUnits="userSpaceOnUse"><stop offset="0" stop-color="#6f6f6f"/><stop offset="0.5" stop-color="#a9a9a9"/><stop offset="1" stop-color="#cfcfcf"/></linearGradient><mask id="mHole2" maskUnits="userSpaceOnUse" x="300" y="300" width="300" height="300"><rect x="300" y="300" width="300" height="300" fill="#fff"/><g clip-path="url(#cEA)"><ellipse cx="464.40" cy="436.80" rx="99.50" ry="58.00" transform="rotate(59.30 464.40 436.80)" fill="#000"/></g></mask><clipPath id="cYel"><path d="M465.30 551.56 L463.98 552.30 L462.62 552.99 L461.23 553.61 L459.81 554.18 L458.35 554.69 L456.87 555.13 L455.36 555.52 L453.82 555.84 L452.25 556.10 L450.66 556.30 L449.04 556.44 L447.40 556.52 L445.74 556.53 L444.05 556.48 L442.35 556.37 L440.62 556.20 L438.88 555.97 L437.12 555.67 L435.35 555.32 L433.56 554.90 L431.76 554.42 L429.94 553.88 L428.12 553.28 L426.28 552.62 L424.44 551.90 L422.59 551.12 L420.74 550.29 L418.88 549.39 L417.02 548.44 L415.16 547.44 L413.29 546.37 L411.43 545.25 L409.57 544.08 L407.71 542.85 L405.86 541.58 L404.01 540.24 L402.17 538.86 L400.34 537.43 L398.52 535.95 L396.71 534.42 L394.91 532.85 L393.13 531.23 L391.36 529.56 L389.60 527.85 L387.86 526.10 L386.15 524.30 L384.45 522.47 L382.77 520.60 L381.11 518.69 L379.48 516.75 L377.87 514.77 L376.28 512.75 L374.72 510.71 L373.19 508.63 L371.69 506.53 L370.21 504.39 L368.77 502.23 L367.36 500.05 L365.98 497.84 L364.63 495.61 L363.32 493.36 L362.04 491.09 L360.80 488.81 L359.59 486.51 L358.42 484.19 L357.30 481.86 L356.21 479.52 L355.16 477.18 L354.15 474.82 L353.18 472.46 L352.25 470.09 L351.37 467.72 L350.53 465.35 L349.74 462.98 L348.98 460.62 L348.28 458.25 L347.62 455.89 L347.00 453.54 L346.43 451.20 L345.91 448.87 L345.44 446.55 L345.01 444.24 L344.63 441.94 L344.29 439.67 L344.01 437.41 L343.77 435.17 L343.59 432.95 L343.45 430.76 L343.36 428.59 L343.32 426.44 L343.32 424.32 L343.38 422.23 L343.48 420.17 L343.64 418.15 L343.84 416.15 L344.09 414.19 L344.39 412.26 L344.73 410.37 L345.13 408.52 L345.57 406.71 L346.06 404.94 L346.60 403.21 L347.18 401.53 L347.81 399.89 L348.48 398.29 L349.20 396.74 L349.97 395.24 L350.78 393.78 L351.63 392.38 L352.52 391.02 L353.46 389.72 L354.44 388.47 L355.46 387.27 L356.52 386.13 L357.63 385.04 L358.77 384.01 L359.94 383.03 L361.16 382.11 L362.41 381.25 L363.70 380.44 L413.60 351.24 L414.92 350.50 L416.28 349.81 L417.67 349.19 L419.09 348.62 L420.55 348.11 L422.03 347.67 L423.54 347.28 L425.08 346.96 L426.65 346.70 L428.24 346.50 L429.86 346.36 L431.50 346.28 L433.16 346.27 L434.85 346.32 L436.55 346.43 L438.28 346.60 L440.02 346.83 L441.78 347.13 L443.55 347.48 L445.34 347.90 L447.14 348.38 L448.96 348.92 L450.78 349.52 L452.62 350.18 L454.46 350.90 L456.31 351.68 L458.16 352.51 L460.02 353.41 L461.88 354.36 L463.74 355.36 L465.61 356.43 L467.47 357.55 L469.33 358.72 L471.19 359.95 L473.04 361.22 L474.89 362.56 L476.73 363.94 L478.56 365.37 L480.38 366.85 L482.19 368.38 L483.99 369.95 L485.77 371.57 L487.54 373.24 L489.30 374.95 L491.04 376.70 L492.75 378.50 L494.45 380.33 L496.13 382.20 L497.79 384.11 L499.42 386.05 L501.03 388.03 L502.62 390.05 L504.18 392.09 L505.71 394.17 L507.21 396.27 L508.69 398.41 L510.13 400.57 L511.54 402.75 L512.92 404.96 L514.27 407.19 L515.58 409.44 L516.86 411.71 L518.10 413.99 L519.31 416.29 L520.48 418.61 L521.60 420.94 L522.69 423.28 L523.74 425.62 L524.75 427.98 L525.72 430.34 L526.65 432.71 L527.53 435.08 L528.37 437.45 L529.16 439.82 L529.92 442.18 L530.62 444.55 L531.28 446.91 L531.90 449.26 L532.47 451.60 L532.99 453.93 L533.46 456.25 L533.89 458.56 L534.27 460.86 L534.61 463.13 L534.89 465.39 L535.13 467.63 L535.31 469.85 L535.45 472.04 L535.54 474.21 L535.58 476.36 L535.58 478.48 L535.52 480.57 L535.42 482.63 L535.26 484.65 L535.06 486.65 L534.81 488.61 L534.51 490.54 L534.17 492.43 L533.77 494.28 L533.33 496.09 L532.84 497.86 L532.30 499.59 L531.72 501.27 L531.09 502.91 L530.42 504.51 L529.70 506.06 L528.93 507.56 L528.12 509.02 L527.27 510.42 L526.38 511.78 L525.44 513.08 L524.46 514.33 L523.44 515.53 L522.38 516.67 L521.27 517.76 L520.13 518.79 L518.96 519.77 L517.74 520.69 L516.49 521.55 L515.20 522.36Z"/></clipPath></defs><g clip-path="url(#cAB2)"><g mask="url(#mHole2)"><path d="M465.30 551.56 L463.98 552.30 L462.62 552.99 L461.23 553.61 L459.81 554.18 L458.35 554.69 L456.87 555.13 L455.36 555.52 L453.82 555.84 L452.25 556.10 L450.66 556.30 L449.04 556.44 L447.40 556.52 L445.74 556.53 L444.05 556.48 L442.35 556.37 L440.62 556.20 L438.88 555.97 L437.12 555.67 L435.35 555.32 L433.56 554.90 L431.76 554.42 L429.94 553.88 L428.12 553.28 L426.28 552.62 L424.44 551.90 L422.59 551.12 L420.74 550.29 L418.88 549.39 L417.02 548.44 L415.16 547.44 L413.29 546.37 L411.43 545.25 L409.57 544.08 L407.71 542.85 L405.86 541.58 L404.01 540.24 L402.17 538.86 L400.34 537.43 L398.52 535.95 L396.71 534.42 L394.91 532.85 L393.13 531.23 L391.36 529.56 L389.60 527.85 L387.86 526.10 L386.15 524.30 L384.45 522.47 L382.77 520.60 L381.11 518.69 L379.48 516.75 L377.87 514.77 L376.28 512.75 L374.72 510.71 L373.19 508.63 L371.69 506.53 L370.21 504.39 L368.77 502.23 L367.36 500.05 L365.98 497.84 L364.63 495.61 L363.32 493.36 L362.04 491.09 L360.80 488.81 L359.59 486.51 L358.42 484.19 L357.30 481.86 L356.21 479.52 L355.16 477.18 L354.15 474.82 L353.18 472.46 L352.25 470.09 L351.37 467.72 L350.53 465.35 L349.74 462.98 L348.98 460.62 L348.28 458.25 L347.62 455.89 L347.00 453.54 L346.43 451.20 L345.91 448.87 L345.44 446.55 L345.01 444.24 L344.63 441.94 L344.29 439.67 L344.01 437.41 L343.77 435.17 L343.59 432.95 L343.45 430.76 L343.36 428.59 L343.32 426.44 L343.32 424.32 L343.38 422.23 L343.48 420.17 L343.64 418.15 L343.84 416.15 L344.09 414.19 L344.39 412.26 L344.73 410.37 L345.13 408.52 L345.57 406.71 L346.06 404.94 L346.60 403.21 L347.18 401.53 L347.81 399.89 L348.48 398.29 L349.20 396.74 L349.97 395.24 L350.78 393.78 L351.63 392.38 L352.52 391.02 L353.46 389.72 L354.44 388.47 L355.46 387.27 L356.52 386.13 L357.63 385.04 L358.77 384.01 L359.94 383.03 L361.16 382.11 L362.41 381.25 L363.70 380.44 L413.60 351.24 L414.92 350.50 L416.28 349.81 L417.67 349.19 L419.09 348.62 L420.55 348.11 L422.03 347.67 L423.54 347.28 L425.08 346.96 L426.65 346.70 L428.24 346.50 L429.86 346.36 L431.50 346.28 L433.16 346.27 L434.85 346.32 L436.55 346.43 L438.28 346.60 L440.02 346.83 L441.78 347.13 L443.55 347.48 L445.34 347.90 L447.14 348.38 L448.96 348.92 L450.78 349.52 L452.62 350.18 L454.46 350.90 L456.31 351.68 L458.16 352.51 L460.02 353.41 L461.88 354.36 L463.74 355.36 L465.61 356.43 L467.47 357.55 L469.33 358.72 L471.19 359.95 L473.04 361.22 L474.89 362.56 L476.73 363.94 L478.56 365.37 L480.38 366.85 L482.19 368.38 L483.99 369.95 L485.77 371.57 L487.54 373.24 L489.30 374.95 L491.04 376.70 L492.75 378.50 L494.45 380.33 L496.13 382.20 L497.79 384.11 L499.42 386.05 L501.03 388.03 L502.62 390.05 L504.18 392.09 L505.71 394.17 L507.21 396.27 L508.69 398.41 L510.13 400.57 L511.54 402.75 L512.92 404.96 L514.27 407.19 L515.58 409.44 L516.86 411.71 L518.10 413.99 L519.31 416.29 L520.48 418.61 L521.60 420.94 L522.69 423.28 L523.74 425.62 L524.75 427.98 L525.72 430.34 L526.65 432.71 L527.53 435.08 L528.37 437.45 L529.16 439.82 L529.92 442.18 L530.62 444.55 L531.28 446.91 L531.90 449.26 L532.47 451.60 L532.99 453.93 L533.46 456.25 L533.89 458.56 L534.27 460.86 L534.61 463.13 L534.89 465.39 L535.13 467.63 L535.31 469.85 L535.45 472.04 L535.54 474.21 L535.58 476.36 L535.58 478.48 L535.52 480.57 L535.42 482.63 L535.26 484.65 L535.06 486.65 L534.81 488.61 L534.51 490.54 L534.17 492.43 L533.77 494.28 L533.33 496.09 L532.84 497.86 L532.30 499.59 L531.72 501.27 L531.09 502.91 L530.42 504.51 L529.70 506.06 L528.93 507.56 L528.12 509.02 L527.27 510.42 L526.38 511.78 L525.44 513.08 L524.46 514.33 L523.44 515.53 L522.38 516.67 L521.27 517.76 L520.13 518.79 L518.96 519.77 L517.74 520.69 L516.49 521.55 L515.20 522.36Z" fill="#ffee00"/><g clip-path="url(#cHull2)"><path d="M119.14 638.41 L859.51 205.17 L657.49 -140.07 L-82.89 293.17Z" fill="url(#gTop2)"/></g><ellipse cx="414.50" cy="466.00" rx="99.50" ry="58.00" transform="rotate(59.30 414.50 466.00)" fill="#000"/><g font-family="Liberation Sans" font-weight="bold" fill="#000" stroke="#000" stroke-width="1.5" clip-path="url(#cHull2)"><text transform="matrix(0.4367 0.9732 -1.0149 0.5939 481.71 448.47)" font-size="52.0">L</text><text transform="matrix(0.1789 0.9573 -1.0149 0.5939 492.24 481.48)" font-size="52.0">a</text><text transform="matrix(-0.0776 0.8315 -1.0149 0.5939 493.81 509.28)" font-size="52.0">n</text></g><g clip-path="url(#cHull2)"><path d="M366.26 379.07L416.16 349.87 M383.83 375.48L433.73 346.28 M404.13 379.93L454.03 350.73 M425.35 392.02L475.25 362.82 M445.60 410.69L495.50 381.49 M463.10 434.28L513.00 405.08 M476.27 460.68L526.17 431.48 M483.96 487.56L533.86 458.36 M485.47 512.52L535.37 483.32 M480.68 533.34L530.58 504.14 M470.01 548.19L519.91 518.99 M454.40 555.73L504.30 526.53 M435.25 555.30L485.15 526.10 M414.26 546.93L464.16 517.73 M393.29 531.37L443.19 502.17 M374.20 510.01L424.10 480.81 M358.69 484.73L408.59 455.53 M348.15 457.79L398.05 428.59 M343.49 431.58L393.39 402.38 M345.15 408.43L395.05 379.23 M352.97 390.39L402.87 361.19" stroke="#e0202a" stroke-width="0.7" fill="none"/></g><path d="M465.30 551.56 L463.98 552.30 L462.62 552.99 L461.23 553.61 L459.81 554.18 L458.35 554.69 L456.87 555.13 L455.36 555.52 L453.82 555.84 L452.25 556.10 L450.66 556.30 L449.04 556.44 L447.40 556.52 L445.74 556.53 L444.05 556.48 L442.35 556.37 L440.62 556.20 L438.88 555.97 L437.12 555.67 L435.35 555.32 L433.56 554.90 L431.76 554.42 L429.94 553.88 L428.12 553.28 L426.28 552.62 L424.44 551.90 L422.59 551.12 L420.74 550.29 L418.88 549.39 L417.02 548.44 L415.16 547.44 L413.29 546.37 L411.43 545.25 L409.57 544.08 L407.71 542.85 L405.86 541.58 L404.01 540.24 L402.17 538.86 L400.34 537.43 L398.52 535.95 L396.71 534.42 L394.91 532.85 L393.13 531.23 L391.36 529.56 L389.60 527.85 L387.86 526.10 L386.15 524.30 L384.45 522.47 L382.77 520.60 L381.11 518.69 L379.48 516.75 L377.87 514.77 L376.28 512.75 L374.72 510.71 L373.19 508.63 L371.69 506.53 L370.21 504.39 L368.77 502.23 L367.36 500.05 L365.98 497.84 L364.63 495.61 L363.32 493.36 L362.04 491.09 L360.80 488.81 L359.59 486.51 L358.42 484.19 L357.30 481.86 L356.21 479.52 L355.16 477.18 L354.15 474.82 L353.18 472.46 L352.25 470.09 L351.37 467.72 L350.53 465.35 L349.74 462.98 L348.98 460.62 L348.28 458.25 L347.62 455.89 L347.00 453.54 L346.43 451.20 L345.91 448.87 L345.44 446.55 L345.01 444.24 L344.63 441.94 L344.29 439.67 L344.01 437.41 L343.77 435.17 L343.59 432.95 L343.45 430.76 L343.36 428.59 L343.32 426.44 L343.32 424.32 L343.38 422.23 L343.48 420.17 L343.64 418.15 L343.84 416.15 L344.09 414.19 L344.39 412.26 L344.73 410.37 L345.13 408.52 L345.57 406.71 L346.06 404.94 L346.60 403.21 L347.18 401.53 L347.81 399.89 L348.48 398.29 L349.20 396.74 L349.97 395.24 L350.78 393.78 L351.63 392.38 L352.52 391.02 L353.46 389.72 L354.44 388.47 L355.46 387.27 L356.52 386.13 L357.63 385.04 L358.77 384.01 L359.94 383.03 L361.16 382.11 L362.41 381.25 L363.70 380.44 L413.60 351.24 L414.92 350.50 L416.28 349.81 L417.67 349.19 L419.09 348.62 L420.55 348.11 L422.03 347.67 L423.54 347.28 L425.08 346.96 L426.65 346.70 L428.24 346.50 L429.86 346.36 L431.50 346.28 L433.16 346.27 L434.85 346.32 L436.55 346.43 L438.28 346.60 L440.02 346.83 L441.78 347.13 L443.55 347.48 L445.34 347.90 L447.14 348.38 L448.96 348.92 L450.78 349.52 L452.62 350.18 L454.46 350.90 L456.31 351.68 L458.16 352.51 L460.02 353.41 L461.88 354.36 L463.74 355.36 L465.61 356.43 L467.47 357.55 L469.33 358.72 L471.19 359.95 L473.04 361.22 L474.89 362.56 L476.73 363.94 L478.56 365.37 L480.38 366.85 L482.19 368.38 L483.99 369.95 L485.77 371.57 L487.54 373.24 L489.30 374.95 L491.04 376.70 L492.75 378.50 L494.45 380.33 L496.13 382.20 L497.79 384.11 L499.42 386.05 L501.03 388.03 L502.62 390.05 L504.18 392.09 L505.71 394.17 L507.21 396.27 L508.69 398.41 L510.13 400.57 L511.54 402.75 L512.92 404.96 L514.27 407.19 L515.58 409.44 L516.86 411.71 L518.10 413.99 L519.31 416.29 L520.48 418.61 L521.60 420.94 L522.69 423.28 L523.74 425.62 L524.75 427.98 L525.72 430.34 L526.65 432.71 L527.53 435.08 L528.37 437.45 L529.16 439.82 L529.92 442.18 L530.62 444.55 L531.28 446.91 L531.90 449.26 L532.47 451.60 L532.99 453.93 L533.46 456.25 L533.89 458.56 L534.27 460.86 L534.61 463.13 L534.89 465.39 L535.13 467.63 L535.31 469.85 L535.45 472.04 L535.54 474.21 L535.58 476.36 L535.58 478.48 L535.52 480.57 L535.42 482.63 L535.26 484.65 L535.06 486.65 L534.81 488.61 L534.51 490.54 L534.17 492.43 L533.77 494.28 L533.33 496.09 L532.84 497.86 L532.30 499.59 L531.72 501.27 L531.09 502.91 L530.42 504.51 L529.70 506.06 L528.93 507.56 L528.12 509.02 L527.27 510.42 L526.38 511.78 L525.44 513.08 L524.46 514.33 L523.44 515.53 L522.38 516.67 L521.27 517.76 L520.13 518.79 L518.96 519.77 L517.74 520.69 L516.49 521.55 L515.20 522.36Z" fill="none" stroke="#c41820" stroke-width="0.8"/><ellipse cx="414.50" cy="466.00" rx="99.50" ry="58.00" transform="rotate(59.30 414.50 466.00)" fill="none" stroke="#c41820" stroke-width="0.8"/></g><circle cx="440" cy="452" r="100" fill="none" stroke="#6d84e6" stroke-width="0.8"/><rect x="338.0" y="450.0" width="4" height="4" fill="#5b78e8"/><rect x="538.0" y="450.0" width="4" height="4" fill="#5b78e8"/><rect x="438.0" y="550.0" width="4" height="4" fill="#5b78e8"/><rect x="438.0" y="350.0" width="4" height="4" fill="#5b78e8"/><rect x="438.8" y="450.8" width="2.4" height="2.4" fill="#5b78e8"/></g></svg>
<!-- appearance panel behind dialog -->
<div class="a" style="left:895px;top:207.7px;width:72.7px;height:204px;background:#535353;border:1px solid #404040"></div>
<div class="a" style="left:895px;top:207.7px;width:72.7px;height:6.2px;background:#3b3b3b"></div>
<div class="a" style="left:895px;top:213.9px;width:72.7px;height:13.7px;background:#474747"></div>
<div class="a" style="left:896px;top:242.5px;width:71px;height:0.7px;background:#5e5e5e"></div>
<div class="a" style="left:896px;top:271px;width:71px;height:0.7px;background:#5e5e5e"></div>
<div class="a" style="left:896px;top:323px;width:71px;height:0.7px;background:#5e5e5e"></div>
<div class="a" style="left:895.5px;top:298px;width:71.5px;height:12.4px;background:#4b6792"></div>
<div class="t" style="left:911px;top:249px;font-size:7px;color:#e6e6e6">3 pt</div>
<div class="t" style="left:900px;top:261px;font-size:7px;color:#e0e0e0">度_默认值</div>
<div class="t" style="left:900px;top:288px;font-size:7px;color:#e0e0e0">度_默认值</div>
<div class="t" style="left:900px;top:301px;font-size:7px;color:#f0f0f0">边角（缓射）</div>
<div class="t" style="left:956px;top:300.5px;font-size:7.5px;color:#e8e8e8;font-style:italic">fx</div>
<div class="t" style="left:903px;top:314px;font-size:7px;color:#e0e0e0">默认值</div>
<svg width="998" height="717">
 <g fill="#cfcfcf"><rect x="957.5" y="218.5" width="8" height="1"/><rect x="957.5" y="221.5" width="8" height="1"/>
 <circle cx="954" cy="210.5" r="0.6"/><circle cx="956" cy="210.5" r="0.6"/></g>
 <path d="M961 209l3 3m0-3l-3 3" stroke="#cfcfcf" stroke-width="0.8"/>
 <g fill="none" stroke="#cfcfcf" stroke-width="0.9">
  <circle cx="922" cy="403.5" r="2.8"/><path d="M920 401.5l4 4"/>
  <rect x="934" y="401" width="4.5" height="5"/>
  <path d="M946 401.5h5 M946.8 401.5v5h3.4v-5"/>
 </g>
</svg>
<!-- right edge pill -->
<div class="a" style="left:981px;top:330px;width:17px;height:72px;background:#1b1b1b;border-radius:12px 0 0 12px"></div>
<svg width="998" height="717"><path d="M994.5 360.5l-5 5.5 5 5.5" stroke="#fff" stroke-width="2.2" fill="none" stroke-linecap="round" stroke-linejoin="round"/></svg>
<!-- pathfinder panel -->
<div class="a" style="left:864.8px;top:520.4px;width:121.6px;height:78.6px;background:#545454;border:1px solid #454545"></div>
<div class="a" style="left:864.8px;top:520.4px;width:121.6px;height:7.1px;background:#3a3a3a"></div>
<div class="a" style="left:907px;top:527.5px;width:79.4px;height:13.5px;background:#454545"></div>
<div class="t" style="left:870px;top:530.5px;font-size:7.5px;color:#eaeaea">路径查找器</div>
<div class="t" style="left:868px;top:545px;font-size:7px;color:#bdbdbd">形状模式：</div>
<div class="t" style="left:868px;top:572px;font-size:7px;color:#bdbdbd">路径查找器：</div>
<svg width="998" height="717">
 <g fill="#cfcfcf"><rect x="978" y="533.5" width="5.5" height="0.9"/><rect x="978" y="536" width="5.5" height="0.9"/>
 <circle cx="972" cy="524" r="0.6"/><circle cx="974" cy="524" r="0.6"/></g>
 <path d="M979.5 522.5l3 3m0-3l-3 3" stroke="#cfcfcf" stroke-width="0.8"/>
 <g fill="#d5d5d5" stroke="#d5d5d5" stroke-width="0.6">
  <rect x="871.5" y="559" width="5" height="4.5"/><rect x="873.5" y="561" width="5" height="4.5"/>
  <rect x="890" y="559" width="5" height="4.5"/><rect x="892" y="561" width="5" height="4.5" fill="none"/>
  <rect x="908.5" y="559" width="5" height="4.5" fill="none"/><rect x="910.5" y="561" width="5" height="4.5" fill="none"/>
  <rect x="927" y="559" width="5" height="4.5" fill="none"/><rect x="929" y="561" width="5" height="4.5" fill="none"/>
  <rect x="872.5" y="586" width="5" height="4.5" fill="none"/><rect x="874.5" y="588" width="5" height="4.5"/>
  <rect x="891.5" y="586" width="5" height="4.5"/><rect x="893.5" y="588" width="5" height="4.5"/>
  <rect x="910.5" y="586" width="5" height="4.5"/><rect x="912.5" y="588" width="5" height="4.5"/>
  <rect x="930" y="586" width="6" height="5.5" fill="none"/><rect x="931.5" y="587.5" width="3" height="3"/>
  <rect x="949" y="586" width="5" height="4.5" fill="none"/><circle cx="952" cy="590" r="2.5" fill="none"/>
  <rect x="968" y="586" width="5" height="4.5" fill="none"/><rect x="970" y="588" width="5" height="4.5"/>
 </g>
 <rect x="945" y="558" width="36" height="8" fill="#5a5a5a" opacity="0.6"/>
</svg>
<div class="a" style="left:566px;top:188.5px;width:335.5px;height:228px;box-shadow:0 3px 7px rgba(0,0,0,0.45)"></div>
<div class="a" style="left:566px;top:188.5px;width:335.5px;height:228px;background:#535353;border:1px solid #3d3d3d"></div>
<div class="a" style="left:566.5px;top:189px;width:334.5px;height:16.3px;background:#fbfbfb"></div>
<div class="t" style="left:571px;top:193px;font-size:8px;color:#222">贴图</div>
<div class="t" style="left:572px;top:212px;font-size:7.5px;color:#bdbdbd">符号：</div>
<div class="a" style="left:593px;top:208.5px;width:87px;height:12px;background:#4a4a4a"></div>
<div class="a" style="left:594.5px;top:211.8px;width:13px;height:6.5px;background:#fff;border:0.5px solid #999"></div>
<div class="a" style="left:595.5px;top:213.2px;width:11px;height:3.5px;background:#f5e400"></div>
<div class="a" style="left:597px;top:214.3px;width:8px;height:1.2px;background:#222"></div>
<div class="t" style="left:610px;top:211.5px;font-size:7.5px;color:#e6e6e6">新建符号</div>
<div class="t" style="left:681px;top:212px;font-size:7.5px;color:#bdbdbd">表面：</div>
<div class="a" style="left:729px;top:208.5px;width:33px;height:12px;background:#494949"></div>
<div class="t" style="left:733px;top:210.5px;font-size:7.5px;color:#e0e0e0">3 / 4</div>
<svg width="998" height="717">
 <g stroke="#bdbdbd" stroke-width="1.2" fill="none"><path d="M668.5 213.3l2.3 2.3 2.3-2.3"/></g>
 <g fill="#c4c4c4">
  <rect x="706.5" y="211" width="1.3" height="8.5"/><path d="M713 211v8.5l-4.5-4.25z"/>
  <path d="M725 211v8.5l-4.5-4.25z"/>
  <path d="M768.5 211v8.5l4.5-4.25z"/>
  <path d="M781.5 211v8.5l4.5-4.25z"/><rect x="786.5" y="211" width="1.3" height="8.5"/>
 </g>
 <circle cx="575.8" cy="237.5" r="3.3" fill="none" stroke="#bdbdbd" stroke-width="0.8"/>
 <rect x="575.4" y="236.5" width="0.8" height="2.5" fill="#bdbdbd"/>
</svg>
<div class="t" style="left:585px;top:233.5px;font-size:7px;color:#c4c4c4">要创建和编辑这些符号，请使用 "符号" 面板。</div>
<!-- preview -->
<div class="a" style="left:572px;top:252.5px;width:323.5px;height:111px;background:#fff;border:1px solid #3a3a3a"></div>
<div class="a" style="left:803.5px;top:292px;width:72px;height:31.3px;background:#f1f1f1;border:0.6px solid #c8c8c8;background-image:linear-gradient(90deg,#d9d9d9 0.6px,transparent 0.6px),linear-gradient(0deg,#dedede 0.6px,transparent 0.6px);background-size:11.9px 100%,100% 10.43px"></div>
<div class="a" style="left:592px;top:292px;width:211.5px;height:31.3px;background:#fff200;border:0.6px solid #7a7a3a"></div>
<div class="t" style="left:599px;top:290.8px;font-size:29.5px;font-weight:bold;color:#000;transform:scaleX(1.066);transform-origin:0 0;-webkit-text-stroke:0.9px #000">Landing Plan</div>
<svg width="998" height="717">
 <g fill="#fff" stroke="#333" stroke-width="0.7">
  <rect x="590" y="290" width="4" height="4"/><rect x="695.7" y="290" width="4" height="4"/><rect x="801.5" y="290" width="4" height="4"/>
  <rect x="590" y="305.6" width="4" height="4"/><rect x="801.5" y="305.6" width="4" height="4"/>
  <rect x="590" y="321.3" width="4" height="4"/><rect x="695.7" y="321.3" width="4" height="4"/><rect x="801.5" y="321.3" width="4" height="4"/>
 </g>
 <path d="M806.5 316.5q2 3-0.5 5l-1.5 0.5" stroke="#333" stroke-width="0.8" fill="none"/>
</svg>
<!-- buttons -->
<div class="a" style="left:572px;top:375px;width:60px;height:10.7px;border:0.8px solid #6e6e6e;border-top-color:#5e5e5e;background:#535353"></div>
<div class="a" style="left:637px;top:375px;width:39.6px;height:10.7px;border:0.8px solid #6e6e6e;border-top-color:#5e5e5e;background:#535353"></div>
<div class="a" style="left:682px;top:375px;width:52px;height:10.7px;border:0.8px solid #6e6e6e;border-top-color:#5e5e5e;background:#535353"></div>
<div class="t" style="left:579px;top:376.5px;font-size:7px;color:#e2e2e2">缩放以适合 (F)</div>
<div class="t" style="left:644px;top:376.5px;font-size:7px;color:#e2e2e2">清除 (C)</div>
<div class="t" style="left:688px;top:376.5px;font-size:7px;color:#e2e2e2">全部清除 (A)</div>
<div class="a" style="left:740px;top:377px;width:6.6px;height:6px;border:0.8px solid #bdbdbd"></div>
<div class="t" style="left:749.5px;top:376.5px;font-size:7px;color:#e2e2e2">贴图具有明暗调（较慢）(H)</div>
<div class="a" style="left:839px;top:377px;width:6.4px;height:6px;border:0.8px solid #bdbdbd"></div>
<div class="t" style="left:848.6px;top:376.5px;font-size:7px;color:#e2e2e2">三维模型不可见</div>
<div class="a" style="left:573px;top:399.5px;width:7px;height:7px;background:#d8d8d8;border-radius:1px"></div>
<svg width="998" height="717"><path d="M574.5 403l1.6 1.6 2.8-3.2" stroke="#444" stroke-width="1" fill="none"/></svg>
<div class="t" style="left:583px;top:399px;font-size:7px;color:#e2e2e2">预览 (P)</div>
<div class="a" style="left:797px;top:396px;width:48px;height:13.6px;border:1.3px solid #f2f2f2;border-radius:7px"></div>
<div class="a" style="left:848px;top:396px;width:48px;height:13.6px;border:1.3px solid #f2f2f2;border-radius:7px"></div>
<div class="t" style="left:814px;top:399px;font-size:7.5px;color:#eee">确定</div>
<div class="t" style="left:865px;top:399px;font-size:7.5px;color:#eee">取消</div>
<div class="a" style="left:12px;top:604px;width:230px;height:9px;background:#4b4b4b"></div>
<div class="t" style="left:16px;top:605.5px;font-size:6px;color:#d0d0d0">GUR</div>
<div class="t" style="left:165px;top:605.5px;font-size:6px;color:#d8d8d8">直接选择</div>
<svg width="998" height="717">
 <g stroke="#bbb" stroke-width="0.8" fill="none"><path d="M43.5 607.5l1.5 1.5 1.5-1.5"/><path d="M96 607.5l1.5 1.5 1.5-1.5"/></g>
 <g fill="#c8c8c8"><rect x="55.5" y="606" width="0.8" height="5"/><path d="M60 606v5l-3-2.5z"/><path d="M67 606v5l-3-2.5z"/><path d="M73 606v5l-3-2.5z"/><path d="M234 606v5l3-2.5z"/></g>
 <g fill="#777"><path d="M108 606v5l3-2.5z"/><path d="M116 606v5l3-2.5z"/><rect x="119.5" y="606" width="0.8" height="5"/></g>
 <path d="M243.5 606l-2 2.5 2 2.5" stroke="#888" stroke-width="0.7" fill="none"/>
 <rect x="745" y="604.5" width="12.5" height="6.5" rx="3" fill="#6e6e6e"/>
</svg>
<!-- taskbar -->
<div class="a" style="left:0;top:613px;width:998px;height:21px;background:linear-gradient(90deg,#1e1e1e 0%,#232323 40%,#2a2a2a 55%,#222 70%,#1c1c1c 100%)"></div>
<div class="a" style="left:118.3px;top:613px;width:25.2px;height:21px;background:#3a3a3a"></div>
<div class="a" style="left:94px;top:632px;width:22px;height:1.5px;background:#6aa8e0"></div>
<div class="a" style="left:118.3px;top:632px;width:25.2px;height:1.5px;background:#6aa8e0"></div>
<svg width="998" height="717">
 <g fill="#e8e8e8"><rect x="0" y="618.5" width="3.2" height="4.6"/><rect x="4" y="618" width="3.2" height="5.1"/><rect x="0" y="624" width="3.2" height="4.6"/><rect x="4" y="624" width="3.2" height="5.1"/></g>
 <circle cx="30.2" cy="621.5" r="2.8" fill="none" stroke="#e8e8e8" stroke-width="1"/><path d="M28.3 623.5l-3.5 3.5" stroke="#e8e8e8" stroke-width="1.1"/>
 <circle cx="53" cy="623.4" r="3.6" fill="none" stroke="#ececec" stroke-width="1.2"/>
 <g fill="none" stroke="#e8e8e8" stroke-width="1"><rect x="75.5" y="620.5" width="6" height="6"/><path d="M74 619v9 M83 619v9"/></g>
 <circle cx="105" cy="623" r="5.6" fill="none" stroke="#eee" stroke-width="1"/><circle cx="105" cy="623" r="4" fill="#e8202a"/>
 <rect x="124" y="617" width="13" height="12" fill="#331a08" stroke="#d2691e" stroke-width="1"/>
 <text x="126.3" y="626.3" font-size="7" font-family="Liberation Sans" font-weight="bold" fill="#e07a2a">Ai</text>
 <!-- tray -->
 <g fill="none" stroke="#e0e0e0" stroke-width="0.9">
  <path d="M804 627l3-3m1-2a1.5 1.5 0 1 0 0.1 0 M809 625a1.5 1.5 0 1 0 0.1 0"/>
  <path d="M822 625.5l2.8-2.8 2.8 2.8"/>
  <rect x="847" y="620.5" width="7" height="5"/><path d="M848 627h5"/>
  <path d="M859 621.5h2l2-2v8l-2-2h-2z M865 621q1.5 2.5 0 5"/>
  <path d="M873 627l2-2 2 1 2-3 M875 622a1.6 1.6 0 1 0 0.1 0"/>
  <rect x="890" y="620.5" width="12" height="6"/>
  <rect x="921" y="619.5" width="7" height="8"/>
  <path d="M985 619h8v6h-3l-2 2v-2h-3z"/>
 </g>
 <path d="M835 620.5q2.5-1 3.5 2v3h-5v-3q0-1.5 1.5-2z" fill="#e84040"/>
 <g fill="#e0e0e0"><rect x="922.5" y="621" width="1" height="1"/><rect x="924.5" y="621" width="1" height="1"/><rect x="926" y="621" width="1" height="1"/><rect x="922.5" y="623.5" width="1" height="1"/><rect x="924.5" y="623.5" width="1" height="1"/><rect x="926" y="623.5" width="1" height="1"/></g>
 <circle cx="991.5" cy="628.5" r="2.8" fill="#1e1e1e" stroke="#e0e0e0" stroke-width="0.7"/>
</svg>
<div class="t" style="left:905px;top:617px;font-size:10px;color:#eee">英</div>
<div class="t" style="left:946.5px;top:614.5px;font-size:6.8px;color:#eaeaea">0:27</div>
<div class="t" style="left:937.5px;top:624.5px;font-size:6.8px;color:#eaeaea">2022/10/6</div>
<div class="a" style="left:0;top:634px;width:998px;height:83px;background:#000"></div>
<div class="t" style="left:5.5px;top:663.5px;font-size:10.5px;color:#fff">11:20</div>
<div class="t" style="left:955px;top:663.5px;font-size:10.5px;color:#fff">23:27</div>
<svg width="998" height="717">
 <rect x="45" y="666" width="900" height="2" fill="#5a5a5a"/>
 <rect x="45" y="666" width="433" height="2" fill="#1d9bf0"/>
 <!-- play -->
 <path d="M22.5 692.5q0-3 2.6-1.5l12.6 8.3q2.4 1.6 0 3.2l-12.6 8.3q-2.6 1.5-2.6-1.5z" fill="#fff" stroke="#fff" stroke-width="2" stroke-linejoin="round"/>
 <!-- prev -->
 <rect x="76.6" y="694.7" width="2.8" height="14.5" rx="1" fill="#fff"/>
 <path d="M91.5 696.5v11q0 1.8-1.5 0.8l-7.3-5q-1.4-1-0.1-1.9l7.4-5.3q1.5-1 1.5 0.4z" fill="#fff"/>
 <!-- next -->
 <rect x="132.7" y="694.7" width="2.8" height="14.5" rx="1" fill="#fff"/>
 <path d="M120.5 696.5v11q0 1.8 1.5 0.8l7.3-5q1.4-1 0.1-1.9l-7.4-5.3q-1.5-1-1.5 0.4z" fill="#fff"/>
 <!-- list -->
 <g fill="#fff"><circle cx="816.5" cy="693.5" r="1.5"/><circle cx="816.5" cy="699.8" r="1.5"/><circle cx="816.5" cy="706" r="1.5"/>
 <rect x="820" y="692.5" width="13.3" height="2" rx="1"/><rect x="820" y="698.8" width="13.3" height="2" rx="1"/><rect x="820" y="705" width="13.3" height="2" rx="1"/></g>
 <!-- settings hex -->
 <path d="M867.2 691.8h9.6l4.6 8-4.6 8h-9.6l-4.6-8z" fill="none" stroke="#fff" stroke-width="1.9" stroke-linejoin="round"/>
 <circle cx="872" cy="699.8" r="3.4" fill="none" stroke="#fff" stroke-width="1.9"/>
 <!-- volume -->
 <path d="M910.3 695.8h3.4l5.6-4.3v16.6l-5.6-4.3h-3.4z" fill="none" stroke="#fff" stroke-width="1.8" stroke-linejoin="round"/>
 <path d="M922.5 696q2.2 3.8 0 7.6 M925.8 692.8q4.2 7-0 14" fill="none" stroke="#fff" stroke-width="1.8" stroke-linecap="round"/>
 <!-- fullscreen -->
 <path d="M955.8 697v-3.5q0-1.2 1.2-1.2h3.5 M968 692.3h3.5q1.2 0 1.2 1.2v3.5 M972.7 703v3.5q0 1.2-1.2 1.2h-3.5 M960.5 707.7h-3.5q-1.2 0-1.2-1.2v-3.5" fill="none" stroke="#fff" stroke-width="1.9" stroke-linecap="round"/>
 <!-- badges -->
 <rect x="672.2" y="681.3" width="30.5" height="13.1" rx="6.5" fill="#3e2c28"/>
 <rect x="774.3" y="681.3" width="30.5" height="13.1" rx="6.5" fill="#3e2c28"/>
</svg>
<div class="t" style="left:678px;top:684px;font-size:9px;font-weight:bold;color:#d9b88f;letter-spacing:-0.3px">SWP</div>
<div class="t" style="left:780px;top:684px;font-size:9px;font-weight:bold;color:#d9b88f;letter-spacing:-0.3px">SWP</div>
<div class="t" style="left:607px;top:694px;font-size:13.7px;color:#fff">倍速</div>
<div class="t" style="left:658px;top:694px;font-size:13.7px;color:#edcd9b">超清</div>
<div class="t" style="left:708px;top:694px;font-size:13.7px;color:#fff">字幕</div>
<div class="t" style="left:760px;top:694px;font-size:13.7px;color:#fff">查找</div>

</body></html>
